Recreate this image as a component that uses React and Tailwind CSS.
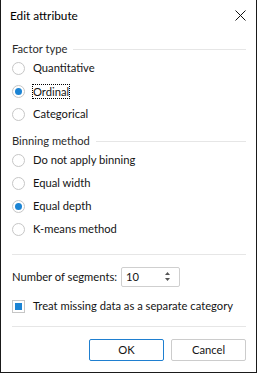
import React from 'react';

const Radio = ({ checked }) => (
    <span className="w-[13px] h-[13px] rounded-full border border-[#c6c6c6] bg-white flex items-center justify-center shrink-0">
        {checked && <span className="w-[7px] h-[7px] rounded-full bg-[#1c84d4]" />}
    </span>
);

const RadioRow = ({ label, checked, focused }) => (
    <div className="h-[23px] flex items-center">
        <Radio checked={checked} />
        <span
            className={
                focused
                    ? 'ml-[7px] px-[1px] leading-[15px] outline-1 outline-dotted outline-black -outline-offset-1'
                    : 'ml-[8px]'
            }
        >
            {label}
        </span>
    </div>
);

const GroupHeader = ({ title, className = '' }) => (
    <div className={`h-[16px] flex items-center ${className}`}>
        <span className="text-[#2b2b2b]">{title}</span>
        <span className="flex-1 h-px bg-[#e6e6e6] ml-[6px]" />
    </div>
);

export default function App() {
    return (
        <div
            className="w-[257px] h-[373px] bg-white border-x border-b border-[#1a1a1a] flex flex-col text-[11.2px] text-[#141414]"
            style={{ fontFamily: 'Lato, "Noto Sans", sans-serif' }}
        >
            {/* Title bar */}
            <div className="h-[32px] flex items-center justify-between pl-[9px] pr-[10px]">
                <span className="text-[#000] text-[11.8px]">Edit attribute</span>
                <svg width="11" height="11" viewBox="0 0 11 11" className="mt-[-1px]">
                    <path d="M0.5 0.5 L10.5 10.5 M10.5 0.5 L0.5 10.5" stroke="#111" strokeWidth="1" />
                </svg>
            </div>

            <div className="flex flex-col pl-[11px] pr-[10px]">
                {/* Factor type */}
                <GroupHeader title="Factor type" className="mt-[9px]" />
                <RadioRow label="Quantitative" />
                <RadioRow label="Ordinal" checked focused />
                <RadioRow label="Categorical" />

                {/* Binning method */}
                <GroupHeader title="Binning method" className="mt-[7px]" />
                <RadioRow label="Do not apply binning" />
                <RadioRow label="Equal width" />
                <RadioRow label="Equal depth" checked />
                <RadioRow label="K-means method" />

                <div className="h-px bg-[#e6e6e6] mt-[13px]" />

                {/* Segments */}
                <div className="h-[20px] mt-[12px] flex items-center">
                    <span>Number of segments:</span>
                    <div className="ml-[4px] w-[59px] h-[20px] border border-[#cfcfcf] rounded-[2px] flex items-center justify-between pl-[4px] pr-[9px]">
                        <span>10</span>
                        <svg width="5" height="9" viewBox="0 0 5 9" className="mt-[-2px]">
                            <path d="M0 3 L2.5 0 L5 3 Z" fill="#555" />
                            <path d="M0 6 L2.5 9 L5 6 Z" fill="#555" />
                        </svg>
                    </div>
                </div>

                <div className="h-[18px] mt-[10px] flex items-center">
                    <span className="w-[13px] h-[13px] border border-[#c6c6c6] bg-white flex items-center justify-center shrink-0">
                        <span className="w-[7px] h-[7px] bg-[#1c84d4]" />
                    </span>
                    <span className="ml-[8px] whitespace-nowrap">Treat missing data as a separate category</span>
                </div>

                <div className="h-px bg-[#e6e6e6] mt-[11px]" />

                {/* Buttons */}
                <div className="mt-[12px] flex justify-end gap-[7px]">
                    <button className="w-[75px] h-[22px] border border-[#1f7fd0] rounded-[2px] bg-white flex items-center justify-center">
                        OK
                    </button>
                    <button className="w-[75px] h-[22px] border border-[#cccccc] rounded-[2px] bg-white flex items-center justify-center">
                        Cancel
                    </button>
                </div>
            </div>
        </div>
    );
}
